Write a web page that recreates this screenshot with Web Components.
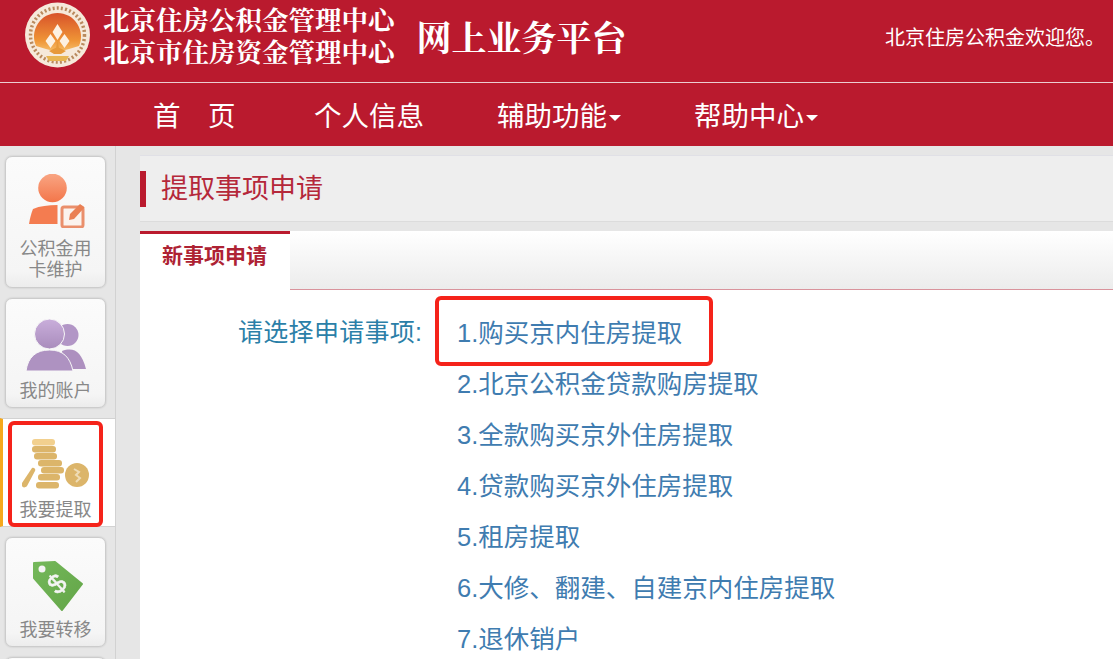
<!DOCTYPE html>
<html lang="zh">
<head>
<meta charset="utf-8">
<title>网上业务平台</title>
<style>
    html, body { margin: 0; height: 659px; overflow: hidden; }
    body { font-family: "Liberation Sans", "Noto Sans CJK SC", sans-serif; background: #e6e6e6; position: relative; }
    .page { display: flex; }
</style>
</head>
<body>
<gjj-header welcome="北京住房公积金欢迎您。"></gjj-header>
<gjj-nav></gjj-nav>
<div class="page">
    <gjj-sidebar>
        <gjj-side-item style="--h:132px">
            <svg slot="icon" width="60" height="54" viewBox="0 0 60 54">
                <defs><linearGradient id="og" x1="0" y1="0" x2="0" y2="1"><stop offset="0" stop-color="#f9a583"/><stop offset="1" stop-color="#f3764a"/></linearGradient></defs>
                <circle cx="26.500" cy="14" r="14.300" fill="url(#og)"/>
                <path d="M3 50 C4 44 5 40 7 35 C14 32 22 31 31.500 31 L31.500 50Z" fill="#f47c50"/>
                <rect x="36" y="33" width="21" height="20" rx="2" fill="#fbf3ee" stroke="#ea8f6c" stroke-width="3"/>
                <path d="M43 46 L44 40 L54 30 L58.500 33.500 L48 45Z" fill="#ea8054"/>
            </svg>
            公积金用<br>卡维护
        </gjj-side-item>
        <gjj-side-item style="--h:110px">
            <svg slot="icon" style="margin-top:3px" width="63" height="52" viewBox="0 0 63 52">
                <defs><linearGradient id="pg" x1="0" y1="0" x2="0" y2="1"><stop offset="0" stop-color="#c9aedb"/><stop offset="1" stop-color="#a98cbc"/></linearGradient></defs>
                <circle cx="43.500" cy="16" r="11" fill="#b296c6"/>
                <path d="M38 32 C50 28 57 32 62 50 L40 50Z" fill="#ad90bf"/>
                <circle cx="25.500" cy="15" r="15" fill="url(#pg)" stroke="#f7f7f7" stroke-width="1"/>
                <path d="M2 52 C4 38 12 31 25.500 31 C39 31 46 38 49 52Z" fill="#ae92c1" stroke="#f7f7f7" stroke-width="1"/>
            </svg>
            我的账户
        </gjj-side-item>
        <gjj-side-item active>
            <svg slot="icon" width="68" height="52" viewBox="0 0 68 52" fill="#dcb56a">
                <rect x="10" y="0" width="23" height="6.500" rx="3" fill="#f2d08e"/>
                <rect x="10" y="7" width="24" height="6.500" rx="3"/>
                <rect x="12" y="14" width="23" height="6.500" rx="3"/>
                <rect x="16" y="21" width="24" height="6.500" rx="3"/>
                <rect x="19" y="28" width="23" height="6.500" rx="3"/>
                <rect x="16" y="35" width="22" height="6.500" rx="3"/>
                <rect x="14" y="43" width="23" height="6.500" rx="3"/>
                <path d="M0 44 L10 29 C12 28 14 30 13 32 L5 47 C2 50 -1 48 0 44Z"/>
                <circle cx="55" cy="36" r="12"/>
                <path d="M52 30 L57 33 L54 36 L58 39 L54 43" fill="none" stroke="#efdcb5" stroke-width="2"/>
            </svg>
            我要提取
        </gjj-side-item>
        <gjj-side-item style="--h:110px">
            <svg slot="icon" style="margin:5px 0 0 4px" width="54" height="52" viewBox="0 0 54 52">
                <defs><linearGradient id="gg" x1="0" y1="0" x2="1" y2="1"><stop offset="0" stop-color="#74b85a"/><stop offset="1" stop-color="#63a548"/></linearGradient></defs>
                <path d="M3 3 L24 2 L51 24 L31 50 L3 18Z" fill="url(#gg)" stroke="url(#gg)" stroke-width="2" stroke-linejoin="round"/>
                <circle cx="11" cy="9" r="3.500" fill="#f4f4f4"/>
                <text x="26" y="33" text-anchor="middle" font-family="Liberation Sans" font-size="27" fill="#f4f4f4" stroke="#f4f4f4" stroke-width=".5" transform="rotate(-42 26 24)">$</text>
            </svg>
            我要转移
        </gjj-side-item>
        <gjj-side-item style="--h:110px"></gjj-side-item>
    </gjj-sidebar>
    <gjj-panel heading="提取事项申请" tab="新事项申请">
        <gjj-apply-list label="请选择申请事项:">
            <gjj-apply-item>1.购买京内住房提取</gjj-apply-item>
            <gjj-apply-item>2.北京公积金贷款购房提取</gjj-apply-item>
            <gjj-apply-item>3.全款购买京外住房提取</gjj-apply-item>
            <gjj-apply-item>4.贷款购买京外住房提取</gjj-apply-item>
            <gjj-apply-item>5.租房提取</gjj-apply-item>
            <gjj-apply-item>6.大修、翻建、自建京内住房提取</gjj-apply-item>
            <gjj-apply-item>7.退休销户</gjj-apply-item>
        </gjj-apply-list>
    </gjj-panel>
</div>
<gjj-mark style="left:8px;top:421px;width:95px;height:106px"></gjj-mark>
<gjj-mark style="left:435px;top:296px;width:278px;height:70px"></gjj-mark>

<script>
const CJK = '"Liberation Sans", "Noto Sans CJK SC", sans-serif';
const SERIF = '"Liberation Serif", "Noto Serif CJK SC", "Noto Sans CJK SC", serif';

class GjjHeader extends HTMLElement {
    constructor() {
        super();
        this.attachShadow({mode: 'open'});
        this.shadowRoot.innerHTML = `
            <style>
                :host { display: flex; align-items: center; height: 82px; background: #ba1a2e; border-bottom: 1px solid #eccdd1; color: #fff; font-family: ${CJK}; padding-left: 25px; }
                svg { flex: none; margin-right: 13px; margin-top: -13px; filter: blur(.4px); }
                .org { font-size: 26.500px; font-weight: 700; margin-right: 22px; white-space: nowrap; margin-top: -9px; font-family: ${SERIF}; }
                .org div { height: 32px; line-height: 32px; }
                .name { font-size: 35px; font-weight: 700; white-space: nowrap; margin-top: -11px; font-family: ${SERIF}; }
                .welcome { margin-left: auto; margin-right: 8px; font-size: 20px; white-space: nowrap; margin-top: -10px; }
            </style>
            <svg width="65" height="66" viewBox="0 0 65 66">
                <defs><linearGradient id="sun" x1="0" y1="0" x2="0" y2="1"><stop offset="0" stop-color="#d8522a"/><stop offset=".7" stop-color="#ef9436"/><stop offset="1" stop-color="#f6bf6a"/></linearGradient></defs>
                <circle cx="32.500" cy="33" r="32.500" fill="#f6e9da"/>
                <circle cx="32.500" cy="33" r="27" fill="none" stroke="#b98a5e" stroke-width="3.500" stroke-dasharray="2 2.200"/>
                <path d="M11 44 A23.500 23.500 0 1 1 54 44 L44 47 L32.500 50 L21 47Z" fill="url(#sun)"/>
                <path d="M32.500 22 L37.500 30 L32.500 38 L27.500 30Z M25.500 32 L30.500 39 L25.500 46 L20.500 39Z M39.500 32 L44.500 39 L39.500 46 L34.500 39Z" fill="#fdf1e2"/>
                <path d="M32.500 38 L35 52 L30 52Z M24 49 L32.500 45 L41 49 L36 52 H29Z" fill="#e7993a"/>
                <path d="M21 54 H44 L41 59 H24Z" fill="#e8b552"/>
            </svg>
            <div class="org"><div>北京住房公积金管理中心</div><div>北京市住房资金管理中心</div></div>
            <div class="name">网上业务平台</div>
            <div class="welcome"></div>`;
    }

    connectedCallback() {
        this.shadowRoot.querySelector('.welcome').textContent = this.getAttribute('welcome');
    }
}

class GjjNav extends HTMLElement {
    constructor() {
        super();
        this.attachShadow({mode: 'open'});
        this.shadowRoot.innerHTML = `
            <style>
                :host { display: flex; align-items: center; gap: 73px; box-sizing: border-box; height: 63px; padding: 0 0 2px 153px; background: #ba1a2e; color: #fff; font-family: ${CJK}; font-size: 27.500px; }
                span { white-space: nowrap; }
                .home { margin-right: 5.500px; }
                .caret::after { content: ""; display: inline-block; width: 0; height: 0; margin-left: 2px; vertical-align: middle; border-top: 6px solid #fff; border-left: 6px solid transparent; border-right: 6px solid transparent; }
            </style>
            <span class="home">首&#12288;页</span>
            <span>个人信息</span>
            <span class="caret">辅助功能</span>
            <span class="caret">帮助中心</span>`;
    }
}

class GjjSidebar extends HTMLElement {
    constructor() {
        super();
        this.attachShadow({mode: 'open'});
        this.shadowRoot.innerHTML = `
            <style>
                :host { display: flex; flex-direction: column; flex: none; box-sizing: border-box; width: 116px; height: 513px; padding-top: 10px; border-right: 1px solid #d2d2d2; margin-right: 24px; overflow: hidden; }
            </style>
            <slot></slot>`;
    }
}

class GjjSideItem extends HTMLElement {
    constructor() {
        super();
        this.attachShadow({mode: 'open'});
        this.shadowRoot.innerHTML = `
            <style>
                :host { display: block; flex: none; padding: 0 9px 10px 5px; font-family: ${CJK}; font-size: 18px; line-height: 21px; color: #888; text-align: center; }
                .btn { box-sizing: border-box; height: var(--h, 132px); width: 101px; padding-top: 17px; border: 1px solid #cccccc; border-radius: 7px; box-shadow: 0 0 2px rgba(0,0,0,.18); background: linear-gradient(#fbfbfb, #f5f5f5 88%, #ececec); display: flex; flex-direction: column; align-items: center; }
                .icon { height: 54px; display: flex; align-items: flex-start; justify-content: center; margin-bottom: 11px; }
                ::slotted(svg) { display: block; filter: blur(.4px); }
                :host([active]) { background: #fff; border-top: 1px solid #d2d2d2; border-bottom: 1px solid #d2d2d2; border-left: 3px solid #f5a81c; padding: 0 10px 0 2px; margin: 0 -1px 10px 0; position: relative; }
                :host([active]) .btn { border: 0; box-shadow: none; background: none; height: 107px; padding-top: 20px; }
                :host([active]) .icon { margin-bottom: 7px; }
            </style>
            <div class="btn"><div class="icon"><slot name="icon"></slot></div><div><slot></slot></div></div>`;
    }
}

class GjjPanel extends HTMLElement {
    constructor() {
        super();
        this.attachShadow({mode: 'open'});
        this.shadowRoot.innerHTML = `
            <style>
                :host { display: block; flex: 1; min-width: 0; padding-top: 9px; font-family: ${CJK}; }
                .title { display: flex; align-items: center; height: 67px; background: #eeeeee; border-top: 1px solid #e0e0e6; border-bottom: 1px solid #dcdcdc; box-sizing: border-box; margin-bottom: 9px; }
                .title i { width: 6px; height: 36px; background: #ba1a2e; margin-right: 15px; }
                .title h1 { margin: -4px 0 0; font-size: 27px; font-weight: 400; color: #b5283a; }
                .body { background: #fff; height: 428px; overflow: hidden; }
                .tabs { display: flex; height: 58px; background: linear-gradient(#fff, #ececec); border-bottom: 1px solid #d9939c; }
                .tab { width: 150px; box-sizing: border-box; height: 59px; background: #fff; border-top: 3px solid #ba1a2e; padding: 6px 0 0 22px; font-size: 21px; line-height: 32px; font-weight: 700; color: #ae2233; }
            </style>
            <div class="title"><i></i><h1></h1></div>
            <div class="body">
                <div class="tabs"><div class="tab"></div></div>
                <slot></slot>
            </div>`;
    }

    connectedCallback() {
        this.shadowRoot.querySelector('h1').textContent = this.getAttribute('heading');
        this.shadowRoot.querySelector('.tab').textContent = this.getAttribute('tab');
    }
}

class GjjApplyList extends HTMLElement {
    constructor() {
        super();
        this.attachShadow({mode: 'open'});
        this.shadowRoot.innerHTML = `
            <style>
                :host { display: flex; padding: 18px 0 0 98px; font-family: ${CJK}; line-height: 51px; }
                .label { width: 219px; flex: none; margin-top: -1px; color: #2b7fa8; font-size: 25px; letter-spacing: .3px; white-space: nowrap; }
                .items { display: flex; flex-direction: column; font-size: 25.500px; }
            </style>
            <div class="label"></div>
            <div class="items"><slot></slot></div>`;
    }

    connectedCallback() {
        this.shadowRoot.querySelector('.label').textContent = this.getAttribute('label');
    }
}

class GjjApplyItem extends HTMLElement {
    constructor() {
        super();
        this.attachShadow({mode: 'open'});
        this.shadowRoot.innerHTML = `
            <style>
                :host { display: block; color: #3f7cb0; white-space: nowrap; }
            </style>
            <slot></slot>`;
    }
}

class GjjMark extends HTMLElement {
    constructor() {
        super();
        this.attachShadow({mode: 'open'});
        this.shadowRoot.innerHTML = `
            <style>
                :host { display: block; position: absolute; box-sizing: border-box; border: 4px solid #f5231a; border-radius: 6px; }
            </style>`;
    }
}

customElements.define('gjj-header', GjjHeader);
customElements.define('gjj-nav', GjjNav);
customElements.define('gjj-sidebar', GjjSidebar);
customElements.define('gjj-side-item', GjjSideItem);
customElements.define('gjj-panel', GjjPanel);
customElements.define('gjj-apply-list', GjjApplyList);
customElements.define('gjj-apply-item', GjjApplyItem);
customElements.define('gjj-mark', GjjMark);
</script>
</body>
</html>
